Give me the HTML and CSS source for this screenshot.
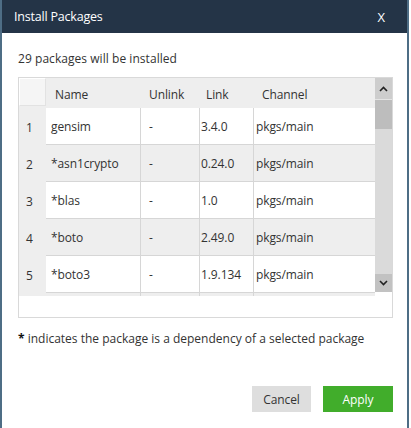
FILE: index.html
```html
<!DOCTYPE html>
<html>
<head>
<meta charset="utf-8">
<link rel="stylesheet" href="styles.css">
</head>
<body>
<div class="window">
  <div class="titlebar">
    <span class="title">Install Packages</span>
    <span class="close">X</span>
  </div>
  <div class="content">
    <p class="summary">29 packages will be installed</p>
    <div class="table-box">
      <div class="table-area">
        <div class="grid">
          <div class="row head">
            <div class="cell num corner"></div>
            <div class="cell name">Name</div>
            <div class="cell unlink">Unlink</div>
            <div class="cell link">Link</div>
            <div class="cell channel">Channel</div>
          </div>
          <div class="row">
            <div class="cell num">1</div>
            <div class="cell name">gensim</div>
            <div class="cell unlink">-</div>
            <div class="cell link">3.4.0</div>
            <div class="cell channel">pkgs/main</div>
          </div>
          <div class="row alt">
            <div class="cell num">2</div>
            <div class="cell name">*asn1crypto</div>
            <div class="cell unlink">-</div>
            <div class="cell link">0.24.0</div>
            <div class="cell channel">pkgs/main</div>
          </div>
          <div class="row">
            <div class="cell num">3</div>
            <div class="cell name">*blas</div>
            <div class="cell unlink">-</div>
            <div class="cell link">1.0</div>
            <div class="cell channel">pkgs/main</div>
          </div>
          <div class="row alt">
            <div class="cell num">4</div>
            <div class="cell name">*boto</div>
            <div class="cell unlink">-</div>
            <div class="cell link">2.49.0</div>
            <div class="cell channel">pkgs/main</div>
          </div>
          <div class="row">
            <div class="cell num">5</div>
            <div class="cell name">*boto3</div>
            <div class="cell unlink">-</div>
            <div class="cell link">1.9.134</div>
            <div class="cell channel">pkgs/main</div>
          </div>
          <div class="row alt">
            <div class="cell num"></div>
            <div class="cell name"></div>
            <div class="cell unlink"></div>
            <div class="cell link"></div>
            <div class="cell channel"></div>
          </div>
        </div>
        <div class="scrollbar">
          <div class="sb-btn sb-up">
            <svg width="9" height="6" viewBox="0 0 9 6"><path d="M1 5 L4.5 1.5 L8 5" fill="none" stroke="#222" stroke-width="1.6"/></svg>
          </div>
          <div class="sb-thumb"></div>
          <div class="sb-track"></div>
          <div class="sb-btn sb-down">
            <svg width="9" height="6" viewBox="0 0 9 6"><path d="M1 1 L4.5 4.5 L8 1" fill="none" stroke="#222" stroke-width="1.6"/></svg>
          </div>
        </div>
      </div>
    </div>
    <p class="note"><b class="star">*</b> indicates the package is a dependency of a selected package</p>
    <div class="actions">
      <button class="btn cancel">Cancel</button>
      <button class="btn apply">Apply</button>
    </div>
  </div>
</div>
</body>
</html>
```

FILE: styles.css
```css
html, body {
  margin: 0;
  padding: 0;
  background: #ffffff;
}

body {
  font-family: "Open Sans", "DejaVu Sans", sans-serif;
  font-size: 12px;
  color: #333333;
}

.window {
  width: 405px;
  height: 440px;
  border-left: 2px solid #4e6d85;
  border-right: 2px solid #4e6d85;
  background: #ffffff;
}

.titlebar {
  height: 33px;
  background: #243447;
  color: #ffffff;
  display: flex;
  align-items: center;
  justify-content: space-between;
  padding: 0 22px 0 12px;
}

.title {
  font-size: 12.5px;
  letter-spacing: -0.2px;
}

.close {
  font-size: 13px;
}

.content {
  padding: 0 14px 0 16px;
}

.summary {
  margin: 0;
  height: 44px;
  line-height: 52px;
  letter-spacing: 0.05px;
}

.table-box {
  border: 1px solid #d9d9d9;
  height: 239px;
}

.table-area {
  display: flex;
  align-items: flex-start;
}

.grid {
  width: 356px;
  height: 218px;
  overflow: hidden;
}

.row {
  display: flex;
  height: 37px;
}

.row.head {
  height: 30px;
  background: #eeeeee;
}

.cell {
  box-sizing: border-box;
  display: flex;
  align-items: center;
  white-space: nowrap;
  overflow: hidden;
  border-bottom: 1px solid #d6d6d6;
  background: #ffffff;
  letter-spacing: -0.1px;
}

.row.alt .cell {
  background: #eeeeee;
}

.row.head .cell {
  background: #eeeeee;
  border-bottom: none;
  border-right: none;
  padding-top: 2px;
}

.cell.num {
  width: 27px;
  background: #eeeeee;
  border-bottom: none;
  padding-left: 7px;
  padding-top: 2px;
}

.row .cell.num {
  background: #eeeeee;
}

.row.head .cell.corner {
  background: #f5f5f5;
  height: 28px;
  border-top: 1px solid #ffffff;
  border-left: 1px solid #ffffff;
  border-bottom: 1px solid #e2e2e2;
  border-right: 1px solid #e2e2e2;
}

.cell.name {
  width: 95px;
  border-right: 1px solid #d6d6d6;
  padding-left: 5px;
}

.row.head .cell.name {
  padding-left: 9px;
}

.cell.unlink {
  width: 59px;
  border-right: 1px solid #d6d6d6;
  padding-left: 8px;
}

.cell.link {
  width: 54px;
  border-right: 1px solid #d6d6d6;
  padding-left: 1px;
}

.row.head .cell.link {
  padding-left: 6px;
}

.cell.channel {
  width: 121px;
  padding-left: 2px;
}

.row.head .cell.channel {
  padding-left: 8px;
}

.scrollbar {
  width: 17px;
  height: 214px;
  display: flex;
  flex-direction: column;
  background: #dadada;
}

.sb-btn {
  display: flex;
  align-items: center;
  justify-content: center;
}

.sb-up {
  height: 21px;
  background: #cdcdcd;
  border-bottom: 1px solid #e4e4e4;
}

.sb-thumb {
  height: 29px;
  background: #bdbdbd;
}

.sb-track {
  flex: 1;
}

.sb-down {
  height: 18px;
  background: #c2c2c2;
}

.note {
  margin: 0;
  height: 44px;
  line-height: 42px;
  letter-spacing: 0;
}

.star {
  color: #111111;
}

.actions {
  display: flex;
  justify-content: flex-end;
  gap: 12px;
  padding-top: 24px;
}

.btn {
  font-family: "Open Sans", "DejaVu Sans", sans-serif;
  font-size: 12px;
  height: 26px;
  border: none;
  padding: 0;
  margin: 0;
  letter-spacing: -0.1px;
}

.cancel {
  width: 59px;
  background: #dedede;
  color: #333333;
}

.apply {
  width: 70px;
  background: #41ad2b;
  color: #ffffff;
}
```
